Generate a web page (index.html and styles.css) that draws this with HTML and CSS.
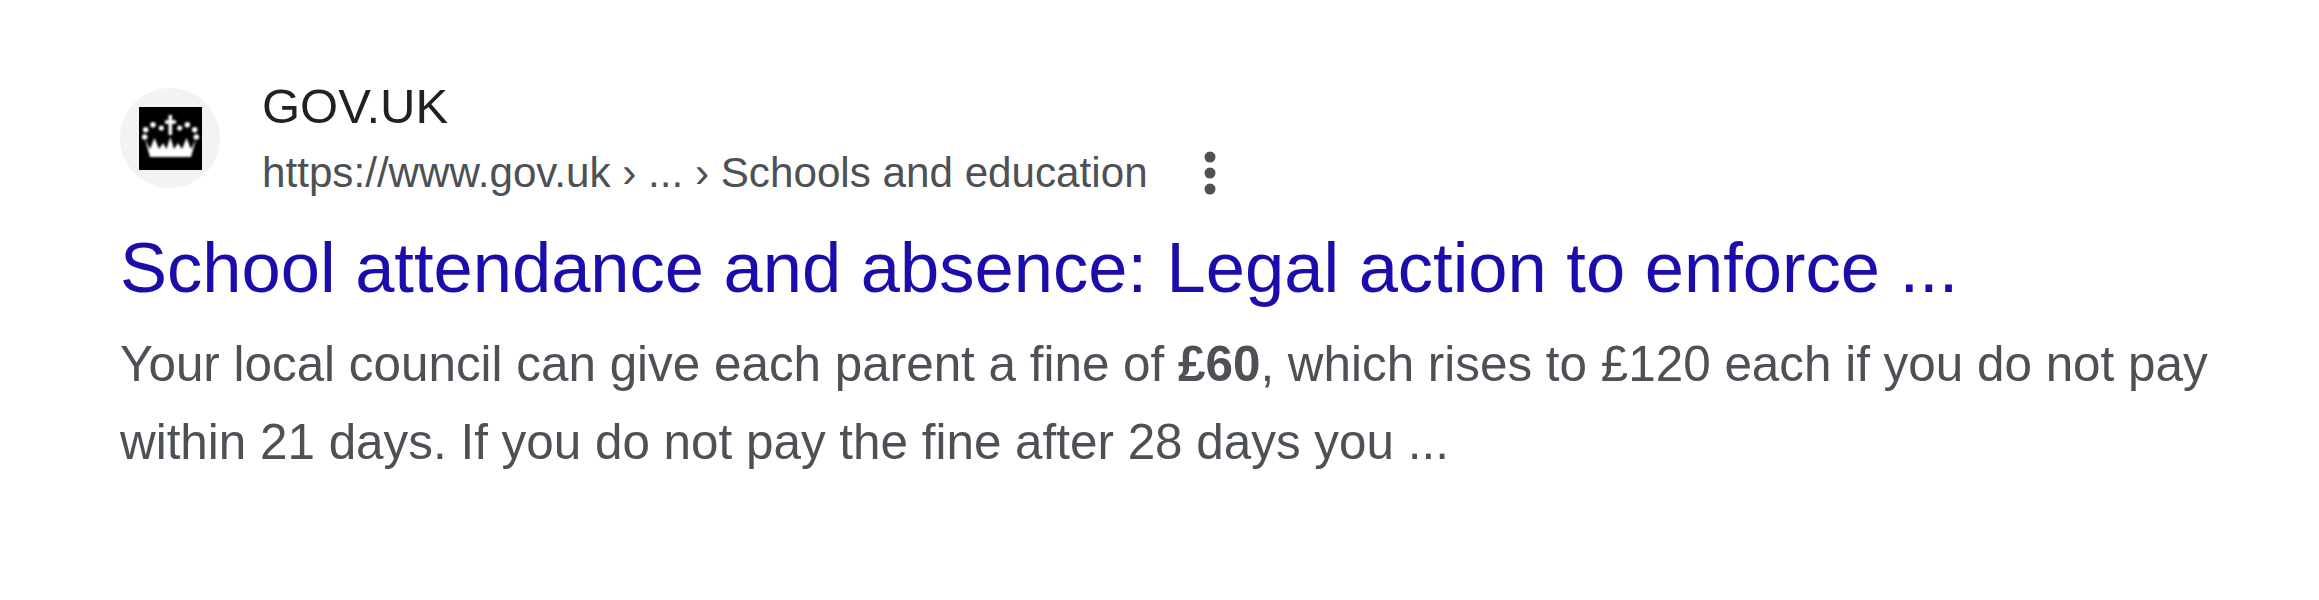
FILE: index.html
```html
<!DOCTYPE html>
<html lang="en">
<head>
    <meta charset="UTF-8">
    <title>School attendance and absence</title>
    <link rel="stylesheet" href="styles.css">
</head>
<body>
    <div class="result">
        <div class="source">
            <div class="favicon">
                <div class="favicon-box">
                    <svg class="crown" viewBox="0 0 63 63" width="63" height="63">
                        <path d="M31.3 8v20M26 15h11" stroke="#fff" stroke-width="3.6" fill="none"/>
                        <circle cx="14" cy="17.7" r="2.8"/>
                        <circle cx="6.7" cy="22.7" r="2.8"/>
                        <circle cx="22.3" cy="21" r="2.6"/>
                        <circle cx="40.7" cy="21" r="2.6"/>
                        <circle cx="48.3" cy="17.7" r="2.8"/>
                        <circle cx="55.7" cy="22.7" r="2.8"/>
                        <circle cx="5.7" cy="30" r="2.8"/>
                        <circle cx="57.3" cy="30" r="2.8"/>
                        <path d="M6 32 L11 50 L52 50 L57 32 L52 42 L47.5 31 L43 42 L39 36 L35 42 L31.3 30 L27.5 42 L24 36 L20 42 L15.5 31 L11 42 Z"/>
                    </svg>
                </div>
            </div>
            <div class="source-text">
                <div class="site-name">GOV.UK</div>
                <div class="site-url">
                    <span>https://www.gov.uk › ... › Schools and education</span>
                    <svg class="more" viewBox="0 0 12 48" width="12" height="48">
                        <circle cx="6" cy="8" r="5.5"/>
                        <circle cx="6" cy="24" r="5.5"/>
                        <circle cx="6" cy="40" r="5.5"/>
                    </svg>
                </div>
            </div>
        </div>
        <h3 class="title">School attendance and absence: Legal action to enforce ...</h3>
        <p class="snippet">Your local council can give each parent a fine of <b>£60</b>, which rises to £120 each if you do not pay within 21 days. If you do not pay the fine after 28 days you ...</p>
    </div>
</body>
</html>
```

FILE: styles.css
```css
* {
    margin: 0;
    padding: 0;
    box-sizing: border-box;
}

body {
    font-family: "Liberation Sans", Arial, sans-serif;
    background: #fff;
}

.result {
    width: 2240px;
    padding: 76px 0 0 120px;
}

.source {
    display: flex;
    align-items: flex-start;
    gap: 42px;
}

.favicon {
    width: 100px;
    height: 100px;
    margin-top: 12px;
    border-radius: 50%;
    background: #f1f3f4;
    display: flex;
    align-items: center;
    justify-content: center;
}

.favicon-box {
    width: 63px;
    height: 63px;
    background: #000;
}

.crown {
    display: block;
    fill: #fff;
    filter: blur(0.8px);
}

.site-name {
    font-size: 49px;
    line-height: 60px;
    color: #202124;
}

.site-url {
    display: flex;
    align-items: center;
    gap: 56px;
    margin-top: 7px;
    font-size: 42.2px;
    line-height: 60px;
    color: #4d5156;
}

.more {
    fill: #4d5156;
}

.title {
    font-size: 70.5px;
    font-weight: 400;
    line-height: 90px;
    color: #1a0dab;
    margin-top: 20px;
}

.snippet {
    font-size: 49.4px;
    line-height: 78px;
    color: #4d5156;
    margin-top: 12px;
}
```
